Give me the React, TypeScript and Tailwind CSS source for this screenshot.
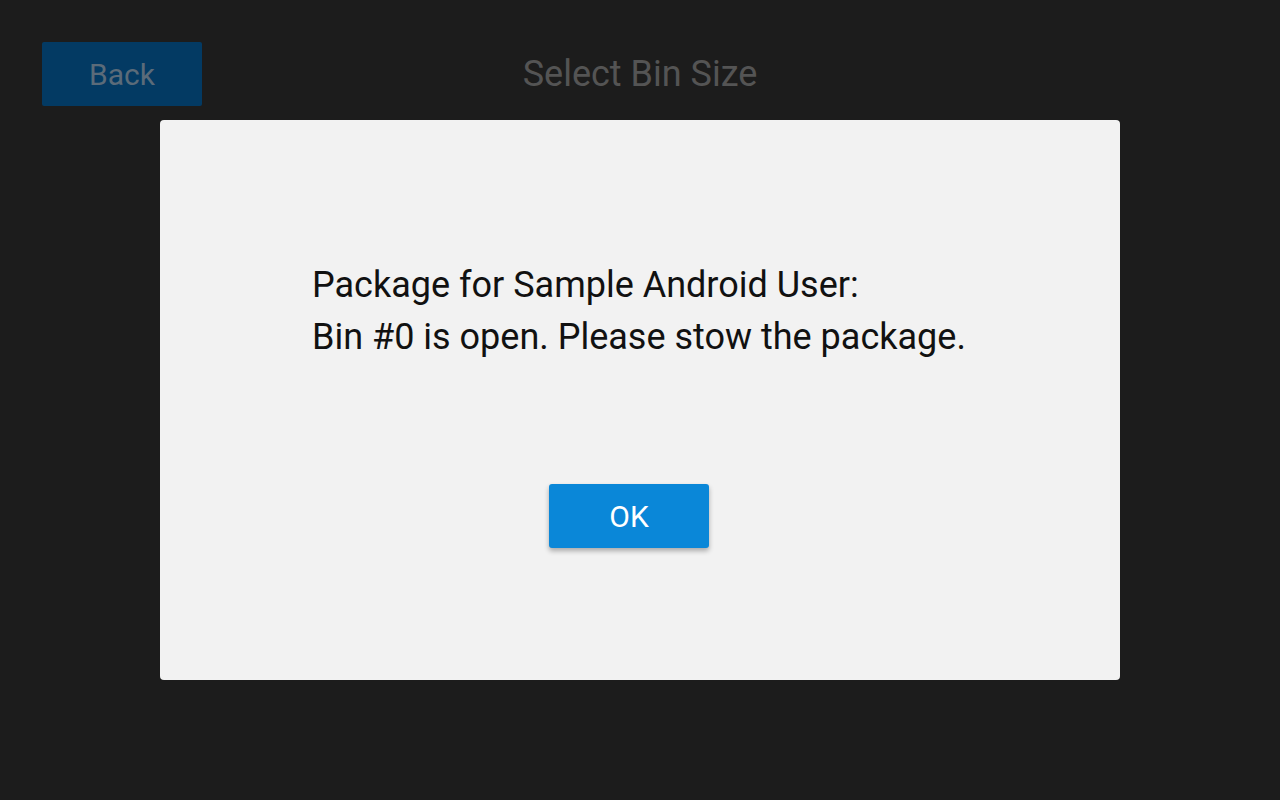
import React from 'react';

const font = { fontFamily: 'Roboto, "Liberation Sans", sans-serif' };

export default function App() {
  return (
    <div className="relative w-[1280px] h-[800px] bg-[#1c1c1c] overflow-hidden" style={font}>
      {/* Header behind the dialog */}
      <div className="flex items-center px-[42px] pt-[42px]">
        <button className="w-[160px] h-[64px] bg-[#033a63] text-[#5b6b79] text-[30px] rounded-[2px]">
          Back
        </button>
        <div className="flex-1 text-center text-[36px] text-[#545454] pr-[160px]">
          Select Bin Size
        </div>
      </div>

      {/* Dialog */}
      <div className="absolute left-[160px] top-[120px] w-[960px] h-[560px] bg-[#f2f2f2] rounded-[4px] flex flex-col">
        <div className="pl-[152px] pt-[139px] text-[36px] leading-[52px] text-[#111111]">
          <div>Package for Sample Android User:</div>
          <div>Bin #0 is open. Please stow the package.</div>
        </div>
        <div className="pl-[389px] pt-[121px]">
          <button className="w-[160px] h-[64px] bg-[#0a87d8] text-white text-[30px] rounded-[3px] shadow-[0_3px_5px_rgba(0,0,0,0.3)]">
            OK
          </button>
        </div>
      </div>
    </div>
  );
}
